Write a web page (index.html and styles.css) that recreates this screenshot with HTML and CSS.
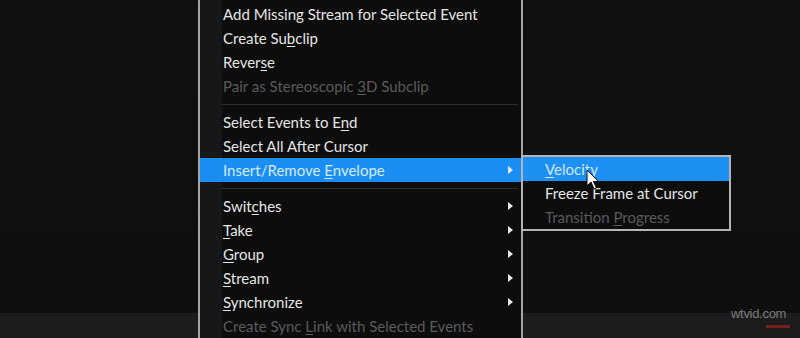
FILE: index.html
```html
<!DOCTYPE html>
<html>
<head>
<meta charset="utf-8">
<link rel="stylesheet" href="styles.css">
</head>
<body>
<div class="page">
  <div class="menu">
    <div class="item">Add Missing Stream for Selected Event</div>
    <div class="item">Create Su<u>b</u>clip</div>
    <div class="item">Rever<u>s</u>e</div>
    <div class="item disabled">Pair as Stereoscopic <u>3</u>D Subclip</div>
    <div class="sep"></div>
    <div class="item">Select Events to E<u>n</u>d</div>
    <div class="item">Select All After Cursor</div>
    <div class="item active has-sub">Insert/Remove <u>E</u>nvelope<span class="arrow"></span>
      <div class="submenu">
        <div class="item active"><u>V</u>elocity</div>
        <div class="item">Freeze Frame at Cursor</div>
        <div class="item disabled">Transition <u>P</u>rogress</div>
      </div>
    </div>
    <div class="sep"></div>
    <div class="item">Swit<u>c</u>hes<span class="arrow"></span></div>
    <div class="item"><u>T</u>ake<span class="arrow"></span></div>
    <div class="item"><u>G</u>roup<span class="arrow"></span></div>
    <div class="item"><u>S</u>tream<span class="arrow"></span></div>
    <div class="item"><u>S</u>ynchronize<span class="arrow"></span></div>
    <div class="item disabled">Create Sync <u>L</u>ink with Selected Events</div>
  </div>
  <div class="watermark">wtvid.com</div>
  <div class="redmark"></div>
  <svg class="cursor" width="14" height="22" viewBox="0 0 14 22">
    <path d="M1 1 L1 17 L5 13 L8 20 L10.5 19 L7.5 12.5 L12.5 12.5 Z" fill="#ffffff" stroke="#000000" stroke-width="1" stroke-linejoin="round"/>
  </svg>
</div>
</body>
</html>
```

FILE: styles.css
```css
html, body {
  margin: 0;
  padding: 0;
}
body {
  width: 800px;
  height: 338px;
  overflow: hidden;
  background: linear-gradient(to bottom, #101010 0, #0f0f0f 313px, #1c1c1c 313px, #1c1c1c 338px);
  font-family: Lato, "Liberation Sans", sans-serif;
  font-size: 15px;
}
.page {
  position: relative;
  width: 800px;
  height: 338px;
}
.menu {
  margin-left: 198px;
  margin-top: -10px;
  padding-top: 10px;
  width: 321px;
  border: 2px solid #a4a4a4;
  background: linear-gradient(to right, #171717 0, #171717 22px, #0d0d0d 22px);
  display: flex;
  flex-direction: column;
}
.item {
  position: relative;
  height: 24px;
  line-height: 24px;
  padding-left: 23px;
  color: #e4e4e4;
  white-space: nowrap;
}
.item u {
  text-decoration: underline;
  text-underline-offset: 2px;
}
.item.disabled {
  color: #5a5a5a;
}
.item.active {
  background: #1a8ef2;
  color: #d6ebff;
}
.arrow {
  position: absolute;
  right: 8px;
  top: 8px;
  width: 0;
  height: 0;
  border-top: 4px solid transparent;
  border-bottom: 4px solid transparent;
  border-left: 5px solid #e8e8e8;
}
.sep {
  height: 12px;
  display: flex;
  align-items: center;
  padding-left: 22px;
  padding-right: 3px;
}
.sep::before {
  content: "";
  flex: 1;
  height: 1px;
  background: #2c2c2c;
}
.submenu {
  position: absolute;
  left: 100%;
  top: -3px;
  width: 206px;
  border: 2px solid #b4b4b4;
  background: #0d0d0d;
  display: flex;
  flex-direction: column;
}
.submenu .item {
  padding-left: 22px;
}
.submenu .item.active {
  background: #1d90f4;
  color: #cfe6ff;
}
.watermark {
  position: absolute;
  left: 731px;
  top: 316px;
  font-family: "Liberation Sans", Arial, sans-serif;
  font-size: 13px;
  color: #7c7c7c;
  letter-spacing: -0.3px;
}
.redmark {
  position: absolute;
  left: 766px;
  top: 335px;
  width: 24px;
  height: 3px;
  background: #7a1f1f;
}
.cursor {
  position: absolute;
  left: 586px;
  top: 179px;
}
```
